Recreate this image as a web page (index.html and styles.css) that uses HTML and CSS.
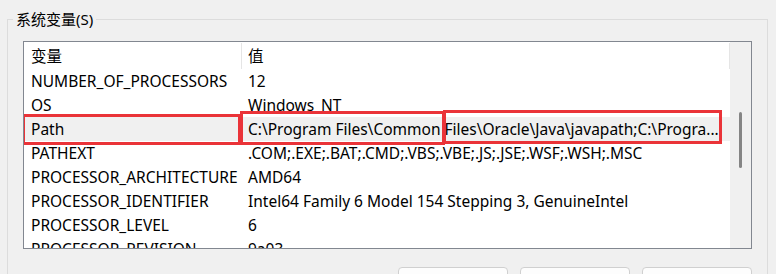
FILE: index.html
```html
<!DOCTYPE html>
<html lang="zh-CN">
<head>
  <meta charset="UTF-8">
  <meta name="viewport" content="width=device-width, initial-scale=1.0">
  <link rel="stylesheet" href="styles.css">
</head>
<body>
  <fieldset class="group">
    <legend>系统变量(S)</legend>

    <div class="listbox">
      <div class="list">
        <div class="header">
          <div class="col-name">变量</div>
          <div class="col-value">值</div>
        </div>
        <div class="row">
          <div class="col-name">NUMBER_OF_PROCESSORS</div>
          <div class="col-value">12</div>
        </div>
        <div class="row">
          <div class="col-name">OS</div>
          <div class="col-value">Windows_NT</div>
        </div>
        <div class="row selected">
          <div class="col-name">Path</div>
          <div class="col-value">C:\Program Files\Common Files\Oracle\Java\javapath;C:\Progra...</div>
          <span class="mark mark-name"></span>
          <span class="mark mark-head"></span>
          <span class="mark mark-tail"></span>
        </div>
        <div class="row">
          <div class="col-name">PATHEXT</div>
          <div class="col-value">.COM;.EXE;.BAT;.CMD;.VBS;.VBE;.JS;.JSE;.WSF;.WSH;.MSC</div>
        </div>
        <div class="row">
          <div class="col-name">PROCESSOR_ARCHITECTURE</div>
          <div class="col-value">AMD64</div>
        </div>
        <div class="row">
          <div class="col-name">PROCESSOR_IDENTIFIER</div>
          <div class="col-value">Intel64 Family 6 Model 154 Stepping 3, GenuineIntel</div>
        </div>
        <div class="row">
          <div class="col-name">PROCESSOR_LEVEL</div>
          <div class="col-value">6</div>
        </div>
        <div class="row">
          <div class="col-name">PROCESSOR_REVISION</div>
          <div class="col-value">9a03</div>
        </div>
      </div>
      <div class="scrollbar">
        <div class="thumb"></div>
      </div>
    </div>

    <div class="buttons">
      <button>新建(W)...</button>
      <button>编辑(I)...</button>
      <button>删除(L)</button>
    </div>
  </fieldset>
</body>
</html>
```
FILE: styles.css
```css
html, body {
  height: 274px;
  overflow: hidden;
}

body {
  font-family: "Noto Sans", "Noto Sans CJK SC", sans-serif;
  font-size: 15.5px;
  color: #000;
  background-color: #f0f0f0;
  margin: 0;
  padding: 9px 0 0 7px;
}

.group {
  width: 761px;
  margin: 0;
  padding: 12px 0 0 15px;
  border: 1px solid #dcdcdc;
  box-sizing: border-box;
}

.group legend {
  font-size: 15px;
  line-height: 20px;
  margin-left: -10px;
  padding: 0 3px;
}

.listbox {
  display: flex;
  width: 729px;
  height: 208px;
  border: 1px solid #828790;
  box-sizing: border-box;
  background-color: #fff;
  overflow: hidden;
}

.list {
  width: 706px;
  flex-shrink: 0;
}

.header, .row {
  display: flex;
  white-space: nowrap;
}

.header {
  height: 27px;
  line-height: 26px;
}

.header .col-name {
  width: 217px;
  padding: 1px 0 0 7px;
  box-sizing: border-box;
}

.header .col-value {
  flex: 1;
  margin-top: 1px;
  padding-left: 6px;
  height: 26px;
  border-left: 1px solid #e5e5e5;
  border-right: 1px solid #e5e5e5;
}

.row {
  position: relative;
  height: 24px;
  line-height: 24px;
}

.row .col-name {
  width: 217px;
  padding-left: 7px;
  box-sizing: border-box;
}

.row .col-value {
  flex: 1;
  padding-left: 7px;
  overflow: hidden;
}

.row.selected {
  background-color: #f0f0f0;
}

.mark {
  position: absolute;
  border: 3px solid #ea3338;
  box-sizing: border-box;
}

.mark-name {
  left: -2px;
  top: -3px;
  width: 219px;
  height: 31px;
}

.mark-head {
  left: 216px;
  top: -6px;
  width: 205px;
  height: 34px;
}

.mark-tail {
  left: 419px;
  top: -7px;
  width: 279px;
  height: 34px;
}

.scrollbar {
  width: 21px;
  background-color: #f0f0f0;
  display: flex;
  justify-content: center;
  padding-top: 70px;
}

.thumb {
  width: 3px;
  height: 56px;
  border-radius: 2px;
  background-color: #858585;
}

.buttons {
  display: flex;
  justify-content: flex-end;
  gap: 12px;
  width: 729px;
  margin-top: 18px;
}

.buttons button {
  width: 110px;
  height: 40px;
  font-family: inherit;
  font-size: 15px;
  background-color: #fdfdfd;
  border: 1px solid #d0d0d0;
  border-radius: 4px;
}
```
